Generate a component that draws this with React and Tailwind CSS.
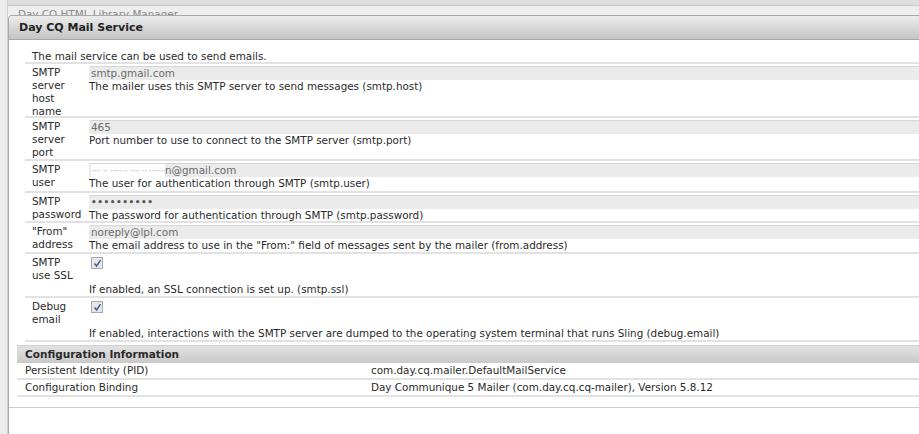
import React from "react";

const rows = [
  { label: ["SMTP", "server", "host", "name"], value: "smtp.gmail.com", desc: "The mailer uses this SMTP server to send messages (smtp.host)", h: "h-[54px]" },
  { label: ["SMTP", "server", "port"], value: "465", desc: "Port number to use to connect to the SMTP server (smtp.port)", h: "h-[43px]" },
  { label: ["SMTP", "user"], value: "user", desc: "The user for authentication through SMTP (smtp.user)", h: "h-[32px]" },
  { label: ["SMTP", "password"], value: "pw", desc: "The password for authentication through SMTP (smtp.password)", h: "h-[30px]" },
  { label: ["\"From\"", "address"], value: "noreply@lpl.com", desc: "The email address to use in the \"From:\" field of messages sent by the mailer (from.address)", h: "h-[31px]" },
];

function Check() {
  return (
    <div className="w-[12px] h-[12px] border border-[#a9a9a9] bg-[#e6e6e6] flex items-center justify-center">
      <svg width="9" height="9" viewBox="0 0 9 9">
        <path d="M1.5 4.5 L3.6 7 L7.5 1.2" fill="none" stroke="#3c5a9a" strokeWidth="1.4" />
      </svg>
    </div>
  );
}

export default function App() {
  return (
    <div className="w-[919px] h-[434px] overflow-hidden bg-white flex text-[10.4px] leading-[13px] text-[#2a2a2a]" style={{ fontFamily: '"DejaVu Sans", Verdana, sans-serif' }}>
      <div className="w-[8px] shrink-0 bg-[#ececec] border-r border-[#cfcfcf]" />
      <div className="flex-1 flex flex-col min-w-0">
        <div className="h-[6px] shrink-0 bg-[#dedede] border-b border-[#c8c8c8]" />
        <div className="h-[9px] shrink-0 bg-[#eeeeee] overflow-hidden pl-[10px] pt-[2px] text-[#8a8a8a] whitespace-nowrap">Day CQ HTML Library Manager</div>
        <div className="flex-1 flex flex-col border-l border-t border-[#a9a9a9] rounded-tl-[4px] overflow-hidden bg-white">
          <div className="h-[24px] shrink-0 flex items-center pl-[10px] font-bold text-[11px] text-[#222] bg-gradient-to-b from-[#ececec] to-[#c4c4c4] border-b border-[#a8a8a8] rounded-tl-[4px]">
            Day CQ Mail Service
          </div>
          <div className="pl-[16px] pt-[10px]">
            <div className="pl-[7px] h-[14px] border-b-2 border-[#e2e2e2]">The mail service can be used to send emails.</div>
            {rows.map((r, i) => (
              <div key={i} className={`flex border-b-2 border-[#e2e2e2] ${r.h}`}>
                <div className="w-[64px] shrink-0 pl-[7px] pt-[2px]">
                  {r.label.map((l, j) => (
                    <div key={j}>{l}</div>
                  ))}
                </div>
                <div className="flex-1 pt-[2px] whitespace-nowrap">
                  <div className="h-[14px] bg-[#ebebeb] border-t border-[#d6d6d6] rounded-tl-[2px] text-[#6a6a6a] pl-[2px] flex items-center">
                    {i === 2 ? (
                      <span className="flex items-center">
                        <span className="w-[74px] overflow-hidden text-[#c4c4c4] tracking-[-1px] bg-white">···· ·· ····· ·· ···· ·· ·······</span>
                        <span>n@gmail.com</span>
                      </span>
                    ) : i === 3 ? (
                      <span className="font-bold text-[#555] text-[9px] tracking-[0.5px]">••••••••••</span>
                    ) : (
                      r.value
                    )}
                  </div>
                  <div>{r.desc}</div>
                </div>
              </div>
            ))}
            <div className="flex border-b-2 border-[#e2e2e2] h-[44px]">
              <div className="w-[64px] shrink-0 pl-[7px] pt-[2px]">
                <div>SMTP</div>
                <div>use SSL</div>
              </div>
              <div className="flex-1 pt-[3px] pl-[2px] whitespace-nowrap">
                <Check />
                <div className="mt-[14px] -ml-[2px]">If enabled, an SSL connection is set up. (smtp.ssl)</div>
              </div>
            </div>
            <div className="flex border-b-2 border-[#e2e2e2] h-[44px]">
              <div className="w-[64px] shrink-0 pl-[7px] pt-[2px]">
                <div>Debug</div>
                <div>email</div>
              </div>
              <div className="flex-1 pt-[3px] pl-[2px] whitespace-nowrap">
                <Check />
                <div className="mt-[14px] -ml-[2px]">If enabled, interactions with the SMTP server are dumped to the operating system terminal that runs Sling (debug.email)</div>
              </div>
            </div>
          </div>
          <div className="pl-[8px] pt-[3px]">
            <div className="h-[18px] flex items-center pl-[8px] font-bold text-[10.5px] bg-gradient-to-b from-[#e2e2e2] to-[#c9c9c9] border-t border-[#d0d0d0]">
              Configuration Information
            </div>
            <div className="h-[17px] flex items-center border-b-2 border-[#e2e2e2] pl-[8px]">
              <div className="w-[346px]">Persistent Identity (PID)</div>
              <div>com.day.cq.mailer.DefaultMailService</div>
            </div>
            <div className="h-[17px] flex items-center border-b-2 border-[#e2e2e2] pl-[8px] whitespace-nowrap">
              <div className="w-[346px]">Configuration Binding</div>
              <div>Day Communique 5 Mailer (com.day.cq.cq-mailer), Version 5.8.12</div>
            </div>
          </div>
          <div className="mt-[10px] border-t border-[#cfcfcf]" />
        </div>
      </div>
    </div>
  );
}
